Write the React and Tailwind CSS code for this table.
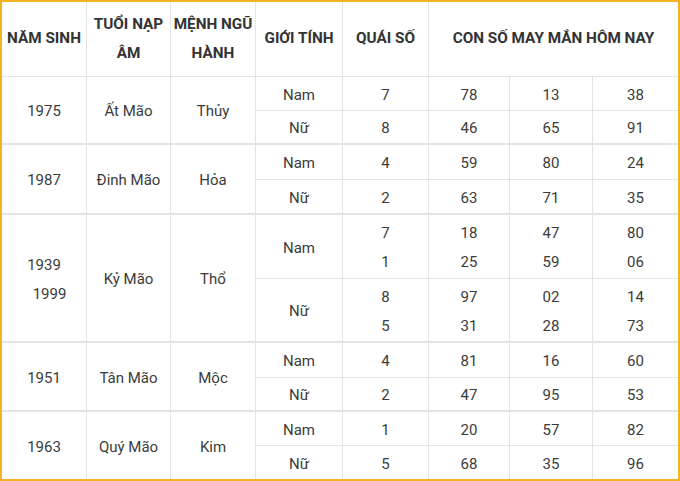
const groups = [
  {
    year: ["1975"],
    tuoi: "Ất Mão",
    menh: "Thủy",
    rows: [
      { gt: "Nam", qs: ["7"], nums: [["78"], ["13"], ["38"]] },
      { gt: "Nữ", qs: ["8"], nums: [["46"], ["65"], ["91"]] },
    ],
  },
  {
    year: ["1987"],
    tuoi: "Đinh Mão",
    menh: "Hỏa",
    rows: [
      { gt: "Nam", qs: ["4"], nums: [["59"], ["80"], ["24"]] },
      { gt: "Nữ", qs: ["2"], nums: [["63"], ["71"], ["35"]] },
    ],
  },
  {
    year: ["1939", "1999"],
    tuoi: "Kỷ Mão",
    menh: "Thổ",
    rows: [
      { gt: "Nam", qs: ["7", "1"], nums: [["18", "25"], ["47", "59"], ["80", "06"]] },
      { gt: "Nữ", qs: ["8", "5"], nums: [["97", "31"], ["02", "28"], ["14", "73"]] },
    ],
  },
  {
    year: ["1951"],
    tuoi: "Tân Mão",
    menh: "Mộc",
    rows: [
      { gt: "Nam", qs: ["4"], nums: [["81"], ["16"], ["60"]] },
      { gt: "Nữ", qs: ["2"], nums: [["47"], ["95"], ["53"]] },
    ],
  },
  {
    year: ["1963"],
    tuoi: "Quý Mão",
    menh: "Kim",
    rows: [
      { gt: "Nam", qs: ["1"], nums: [["20"], ["57"], ["82"]] },
      { gt: "Nữ", qs: ["5"], nums: [["68"], ["35"], ["96"]] },
    ],
  },
];

const cell = "flex flex-col items-center justify-center text-center border-[#e4e4e4]";
const body = `${cell} pt-[3px]`;
const head = `${cell} border-b font-bold text-[#333] text-[15.3px] pb-[1px]`;

function Lines({ items, indentSecond }) {
  return items.map((t, i) => (
    <span key={i} className={indentSecond && i === 1 ? "pl-[11px]" : ""}>
      {t}
    </span>
  ));
}

export default function App() {
  return (
    <div
      className="w-[680px] h-[481px] bg-white border-[#f5b321] border-l-2 border-r-2 border-t-2 border-b-2 text-[15px] text-[#3b3b3b]"
      style={{ fontFamily: "Roboto, 'Noto Sans', sans-serif" }}
    >
      <div className="grid grid-cols-[85px_84px_85px_87px_86px_81px_83px_85px] grid-rows-[75px_34px_34px_35px_35px_64px_64px_35px_34px_34px_33px] leading-[29px]">
        {/* header */}
        <div className={`${head} border-r`}>NĂM SINH</div>
        <div className={`${head} border-r`}>
          <span>TUỔI NẠP</span>
          <span>ÂM</span>
        </div>
        <div className={`${head} border-r`}>
          <span>MỆNH NGŨ</span>
          <span>HÀNH</span>
        </div>
        <div className={`${head} border-r`}>GIỚI TÍNH</div>
        <div className={`${head} border-r`}>QUÁI SỐ</div>
        <div className={`${head} col-span-3`}>CON SỐ MAY MẮN HÔM NAY</div>

        {groups.map((g, gi) => {
          const last = gi === groups.length - 1;
          const gb = last ? "" : "border-b-2";
          return [
            <div key={`y${gi}`} className={`${body} row-span-2 border-r ${gb}`}>
              <Lines items={g.year} indentSecond />
            </div>,
            <div key={`t${gi}`} className={`${body} row-span-2 border-r ${gb}`}>
              {g.tuoi}
            </div>,
            <div key={`m${gi}`} className={`${body} row-span-2 border-r ${gb}`}>
              {g.menh}
            </div>,
            ...g.rows.flatMap((r, ri) => {
              const b = ri === 0 ? "border-b" : gb;
              return [
                <div key={`g${gi}${ri}`} className={`${body} border-r ${b}`}>
                  {r.gt}
                </div>,
                <div key={`q${gi}${ri}`} className={`${body} border-r ${b}`}>
                  <Lines items={r.qs} />
                </div>,
                ...r.nums.map((n, ni) => (
                  <div
                    key={`n${gi}${ri}${ni}`}
                    className={`${body} ${ni < 2 ? "border-r" : ""} ${b}`}
                  >
                    <Lines items={n} />
                  </div>
                )),
              ];
            }),
          ];
        })}
      </div>
    </div>
  );
}
